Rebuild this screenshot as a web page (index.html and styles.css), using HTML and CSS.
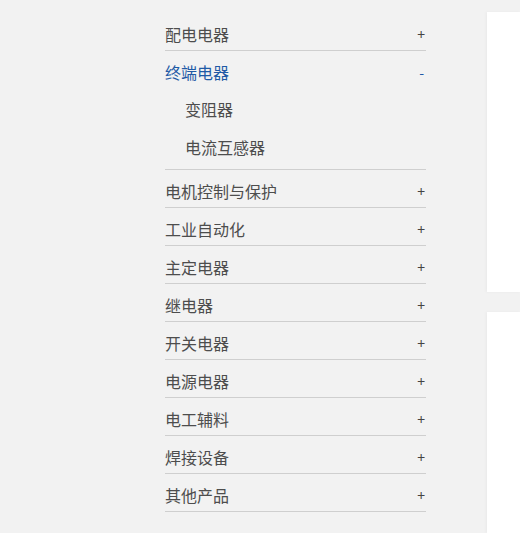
FILE: index.html
```html
<!DOCTYPE html>
<html lang="zh-CN">
<head>
    <meta charset="UTF-8">
    <meta name="viewport" content="width=device-width, initial-scale=1.0">
    <title>产品分类</title>
    <link rel="stylesheet" href="styles.css">
</head>
<body>
    <div class="page">
        <ul class="menu">
            <li class="menu-item"><div class="menu-title">配电电器<span class="toggle">+</span></div></li>
            <li class="menu-item open">
                <div class="menu-title">终端电器<span class="toggle">-</span></div>
                <ul class="sub-menu">
                    <li>变阻器</li>
                    <li>电流互感器</li>
                </ul>
            </li>
            <li class="menu-item"><div class="menu-title">电机控制与保护<span class="toggle">+</span></div></li>
            <li class="menu-item"><div class="menu-title">工业自动化<span class="toggle">+</span></div></li>
            <li class="menu-item"><div class="menu-title">主定电器<span class="toggle">+</span></div></li>
            <li class="menu-item"><div class="menu-title">继电器<span class="toggle">+</span></div></li>
            <li class="menu-item"><div class="menu-title">开关电器<span class="toggle">+</span></div></li>
            <li class="menu-item"><div class="menu-title">电源电器<span class="toggle">+</span></div></li>
            <li class="menu-item"><div class="menu-title">电工辅料<span class="toggle">+</span></div></li>
            <li class="menu-item"><div class="menu-title">焊接设备<span class="toggle">+</span></div></li>
            <li class="menu-item"><div class="menu-title">其他产品<span class="toggle">+</span></div></li>
        </ul>
        <div class="side">
            <div class="panel panel-top"></div>
            <div class="panel panel-bottom"></div>
        </div>
    </div>
</body>
</html>
```

FILE: styles.css
```css
body { margin: 0; background: #f2f2f2; font-family: "Noto Sans CJK SC", "Noto Sans", sans-serif; color: #4d4d4d; overflow: hidden; }
.page { display: flex; padding: 12px 0 0 165px; height: 521px; }
.menu { list-style: none; margin: 0; padding: 0; width: 261px; flex-shrink: 0; }
.menu-item { border-bottom: 1px solid #cfcfcf; }
.menu-title { display: flex; justify-content: space-between; align-items: center; padding: 11px 1px 6px 0; height: 20px; font-size: 16px; line-height: 20px; }
.menu-item:first-child .menu-title { padding-top: 12px; }
.toggle { font-size: 14px; color: #444; }
.open .menu-title { color: #1f5aa6; }
.open .toggle { color: #1f5aa6; padding-right: 1px; }
.sub-menu { list-style: none; margin: 0; padding: 0 0 5px 20px; }
.sub-menu li { padding-top: 11px; height: 27px; font-size: 16px; line-height: 20px; }
.side { margin-left: 61px; flex: 1; display: flex; flex-direction: column; gap: 20px; }
.panel { background: #fff; box-shadow: -1px 0 3px rgba(0, 0, 0, 0.04); }
.panel-top { height: 280px; }
.panel-bottom { flex: 1; }
```
